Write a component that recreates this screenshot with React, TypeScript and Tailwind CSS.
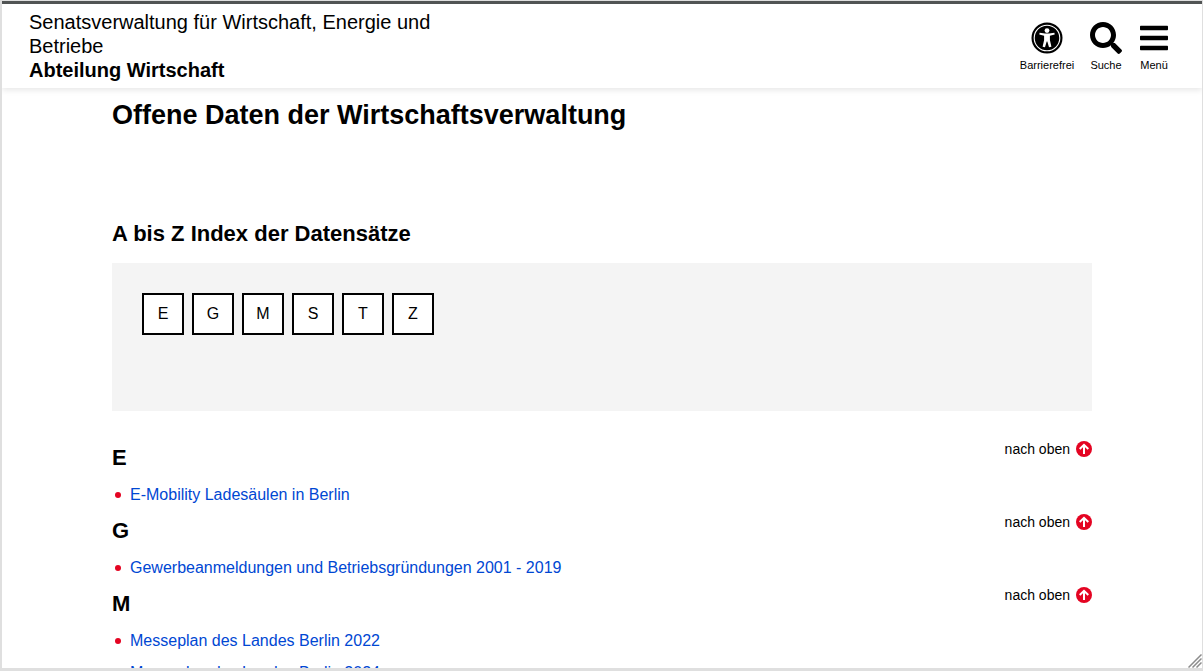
import React from "react";
import { FaBars, FaSearch } from "react-icons/fa";

const letters = ["E", "G", "M", "S", "T", "Z"];

const sections = [
  { letter: "E", items: ["E-Mobility Ladesäulen in Berlin"] },
  { letter: "G", items: ["Gewerbeanmeldungen und Betriebsgründungen 2001 - 2019"] },
  { letter: "M", items: ["Messeplan des Landes Berlin 2022", "Messeplan des Landes Berlin 2024"] },
];

function AccessIcon() {
  return (
    <svg viewBox="0 0 32 32" className="size-8" aria-hidden="true">
      <circle cx="16" cy="16" r="15.5" />
      <circle cx="16" cy="16" r="12.8" fill="none" stroke="#fff" strokeWidth="1.1" />
      <circle cx="16" cy="8.6" r="2.4" fill="#fff" />
      <path
        d="M8.6 10.7L14 11.6H18L23.4 10.7L23.7 12.6L18.9 13.8V18L20.4 24.8L18 25.3L16.3 19.6H15.7L14 25.3L11.6 24.8L13.1 18V13.8L8.3 12.6Z"
        fill="#fff"
      />
    </svg>
  );
}

function ArrowUpCircle() {
  return (
    <svg viewBox="0 0 16 16" className="size-4" aria-hidden="true">
      <circle cx="8" cy="8" r="8" fill="#e40422" />
      <path d="M8 13V4M3.7 8L8 3.8l4.3 4.2" fill="none" stroke="#fff" strokeWidth="2" />
    </svg>
  );
}

function ResizeGrip() {
  return (
    <svg viewBox="0 0 14 14" className="absolute right-0 bottom-0 size-3.5" aria-hidden="true">
      <path d="M0.5 13.5L13.5 0.5M4.5 13.5L13.5 4.5M8.5 13.5L13.5 8.5" stroke="#8c8c8c" strokeWidth="1.5" />
    </svg>
  );
}

function Header() {
  return (
    <header className="relative flex items-start justify-between border-t-3 border-[#515454] bg-white px-7 py-1.5 pl-[27px] shadow-[0_2px_6px_rgba(0,0,0,0.1)]">
      <a href="#top" className="max-w-[440px] text-xl leading-6 text-black">
        Senatsverwaltung für Wirtschaft, Energie und Betriebe
        <strong className="block font-bold">Abteilung Wirtschaft</strong>
      </a>
      <nav className="flex gap-3 pt-3 text-[11px] leading-4">
        <button type="button" className="flex w-[62px] flex-col items-center gap-[3px]">
          <AccessIcon />
          Barrierefrei
        </button>
        <button type="button" className="flex w-8 flex-col items-center gap-[3px]">
          <FaSearch className="size-8" />
          Suche
        </button>
        <button type="button" className="flex w-10 flex-col items-center gap-[3px]">
          <FaBars className="size-8" />
          Menü
        </button>
      </nav>
    </header>
  );
}

export default function App() {
  return (
    <div
      id="top"
      className="relative flex h-screen flex-col overflow-hidden border-t border-r border-b-3 border-l-2 border-[#dfdfdf] bg-white text-black [font-family:'Liberation_Sans',Arial,sans-serif]"
    >
      <Header />
      <main className="mx-auto min-h-0 w-full max-w-[980px] flex-1 overflow-hidden pt-[9px]">
        <h1 className="text-[27px] leading-9 font-bold">Offene Daten der Wirtschaftsverwaltung</h1>
        <h2 className="mt-[87px] text-[22px] leading-7 font-bold">A bis Z Index der Datensätze</h2>
        <nav aria-label="Index" className="mt-[15px] flex h-[148px] gap-2 bg-[#f4f4f4] p-[30px]">
          {letters.map((letter) => (
            <a
              key={letter}
              href={`#${letter}`}
              className="flex size-[42px] items-center justify-center border-2 border-black bg-white text-base"
            >
              {letter}
            </a>
          ))}
        </nav>
        <div className="mt-[30px] flex flex-col gap-[3px]">
          {sections.map((section) => (
            <section key={section.letter} id={section.letter}>
              <div className="flex items-start justify-between">
                <h3 className="text-[22px] leading-[34px] font-bold">{section.letter}</h3>
                <a href="#top" className="flex items-center gap-1.5 text-sm leading-4">
                  nach oben
                  <ArrowUpCircle />
                </a>
              </div>
              <ul className="mt-1">
                {section.items.map((item) => (
                  <li key={item} className="flex items-center gap-[9px] pl-[3px] leading-8">
                    <span className="size-1.5 rounded-full bg-[#e40422]" />
                    <a href={`#${section.letter}`} className="text-base leading-8 text-[#0047d3]">
                      {item}
                    </a>
                  </li>
                ))}
              </ul>
            </section>
          ))}
        </div>
      </main>
      <ResizeGrip />
    </div>
  );
}
